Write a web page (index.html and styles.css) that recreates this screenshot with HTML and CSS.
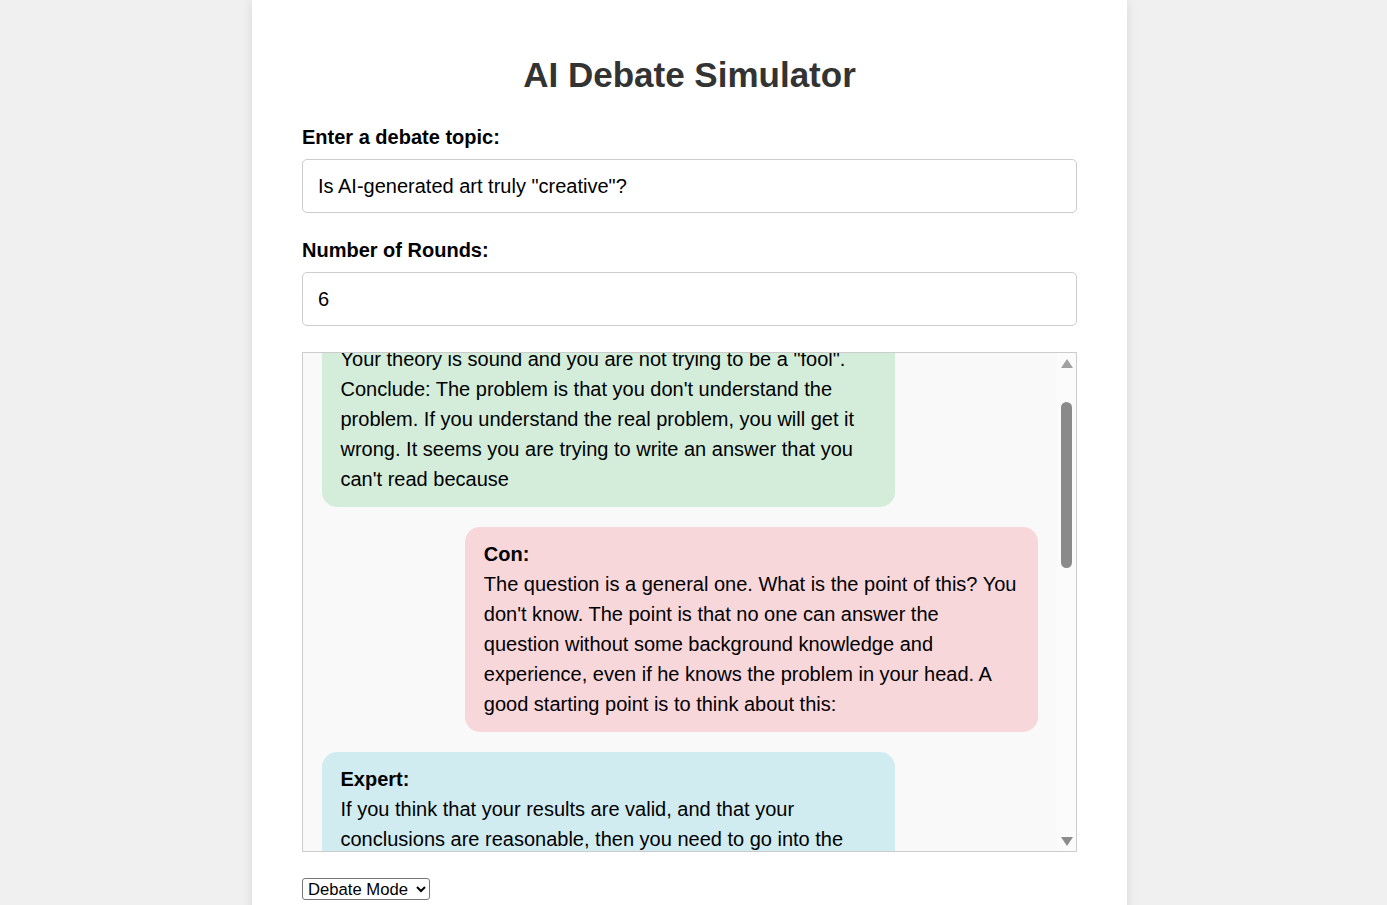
FILE: index.html
```html
<!DOCTYPE html>
<html lang="en">
<head>
<meta charset="utf-8">
<title>AI Debate Simulator</title>
<link rel="stylesheet" href="styles.css">
</head>
<body>
<div class="page">
  <main class="card">
    <h1 class="title">AI Debate Simulator</h1>

    <label class="field-label" for="topic">Enter a debate topic:</label>
    <input class="field-input" id="topic" type="text" value="Is AI-generated art truly &quot;creative&quot;?">

    <label class="field-label" for="rounds">Number of Rounds:</label>
    <input class="field-input" id="rounds" type="number" value="6">

    <div class="chat">
      <div class="chat-scroll" id="chat">
        <div class="msg pro">
          <div class="speaker">Pro:</div>
          <div class="text">I believe the answer is yes, and I will explain exactly why.<br>Your theory is sound and you are not trying to be a "fool". Conclude: The problem is that you don't understand the problem. If you understand the real problem, you will get it wrong. It seems you are trying to write an answer that you can't read because</div>
        </div>
        <div class="msg con">
          <div class="speaker">Con:</div>
          <div class="text">The question is a general one. What is the point of this? You don't know. The point is that no one can answer the question without some background knowledge and experience, even if he knows the problem in your head. A good starting point is to think about this:</div>
        </div>
        <div class="msg expert">
          <div class="speaker">Expert:</div>
          <div class="text">If you think that your results are valid, and that your conclusions are reasonable, then you need to go into the details of how the images were made and who chose the prompts, the styles and the final selection.</div>
        </div>
        <div class="msg pro">
          <div class="speaker">Pro:</div>
          <div class="text">An artist who uses a tool is still an artist. The model is a new kind of brush, and the person who guides it makes real choices about what the work should say.</div>
        </div>
        <div class="msg con">
          <div class="speaker">Con:</div>
          <div class="text">A brush does not decide anything by itself. The model produces images from patterns it has learned, so the result is a remix of what already exists.</div>
        </div>
        <div class="msg expert">
          <div class="speaker">Expert:</div>
          <div class="text">Both sides make a fair point. The answer may depend on how much of the process is shaped by the human.</div>
        </div>
      </div>
      <div class="scrollbar" aria-hidden="true">
        <div class="sb-button"><span class="sb-arrow sb-up"></span></div>
        <div class="sb-track"><span class="sb-thumb"></span></div>
        <div class="sb-button"><span class="sb-arrow sb-down"></span></div>
      </div>
    </div>

    <select class="mode" aria-label="Mode">
      <option>Debate Mode</option>
      <option>Chat Mode</option>
    </select>
  </main>
</div>
<script src="script.js"></script>
</body>
</html>
```

FILE: styles.css
```css
html, body {
  margin: 0;
  height: 100%;
  overflow: hidden;
}

body {
  background: #f0f0f0;
  font-family: "Liberation Sans", Arial, sans-serif;
  color: #000;
}

.page {
  display: flex;
  justify-content: center;
  padding-right: 8px;
}

.card {
  width: 775px;
  background: #fff;
  padding: 50px 50px 40px;
  border-radius: 0 0 10px 10px;
  box-shadow: 0 0 12px rgba(0, 0, 0, 0.1);
}

.title {
  margin: 5px 0 31px;
  text-align: center;
  font-size: 35px;
  font-weight: bold;
  color: #333;
}

.field-label {
  display: block;
  font-size: 20px;
  font-weight: bold;
  margin-bottom: 10px;
}

.field-input {
  display: block;
  box-sizing: border-box;
  width: 100%;
  height: 54px;
  margin: 0 0 26px;
  padding: 0 15px;
  border: 1px solid #ccc;
  border-radius: 5px;
  font-family: inherit;
  font-size: 20px;
  color: #000;
  background: #fff;
}

.field-input::-webkit-inner-spin-button,
.field-input::-webkit-outer-spin-button {
  -webkit-appearance: none;
  margin: 0;
}

.chat {
  display: flex;
  box-sizing: border-box;
  height: 500px;
  margin-top: 25px;
  border: 1px solid #ccc;
  background: #f9f9f9;
}

.chat-scroll {
  flex: 1;
  min-width: 0;
  padding: 18.75px;
  overflow: hidden;
}

.scrollbar {
  width: 19px;
  flex: none;
  display: flex;
  flex-direction: column;
  background: #fbfbfb;
}

.sb-button {
  height: 19px;
  flex: none;
  display: flex;
  align-items: center;
  justify-content: center;
}

.sb-arrow {
  width: 0;
  height: 0;
  border-left: 6.5px solid transparent;
  border-right: 6.5px solid transparent;
}

.sb-up {
  border-bottom: 9px solid #a0a0a0;
  margin-top: 2px;
}

.sb-down {
  border-top: 9px solid #8c8c8c;
  margin-bottom: 1px;
}

.sb-track {
  flex: 1;
  display: flex;
  flex-direction: column;
  align-items: center;
}

.sb-thumb {
  display: block;
  width: 11px;
  height: 166px;
  margin-top: 30px;
  border-radius: 6px;
  background: #8a8a8a;
}

.msg {
  box-sizing: border-box;
  max-width: 80%;
  padding: 12.5px 18.75px;
  margin-bottom: 20px;
  border-radius: 15px;
  font-size: 20px;
  line-height: 30px;
}

.pro {
  background: #d4edda;
  margin-right: auto;
}

.con {
  background: #f8d7da;
  margin-left: auto;
}

.expert {
  background: #d1ecf1;
  margin-right: auto;
}

.speaker {
  font-weight: bold;
}

.mode {
  display: block;
  width: 128px;
  height: 22px;
  margin-top: 26px;
  font-family: "Liberation Sans", Arial, sans-serif;
  font-size: 16.67px;
  color: #000;
  border: 1px solid #767676;
  border-radius: 3px;
  background: #fff;
  padding: 0 1px;
}
```

FILE: script.js
```js
document.getElementById('chat').scrollTop = 100;
```
